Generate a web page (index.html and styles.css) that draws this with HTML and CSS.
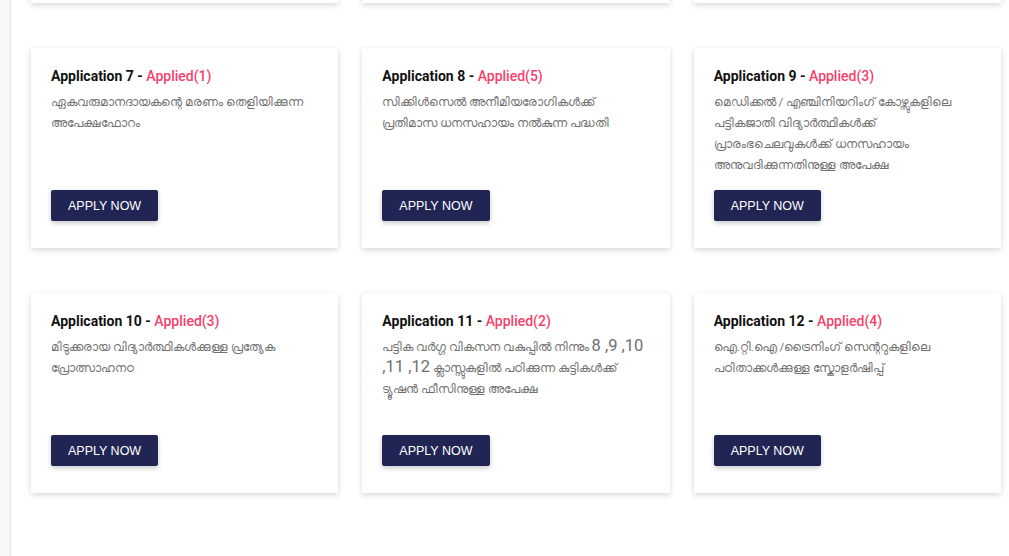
FILE: index.html
```html
<!DOCTYPE html>
<html lang="ml">
<head>
<meta charset="utf-8">
<title>Applications</title>
<link rel="stylesheet" href="styles.css">
</head>
<body>
<div class="layout">
  <aside class="sidebar"></aside>
  <main class="main">
    <div class="grid">
      <div class="card">
        <h3 class="title">Application 4 - <span class="applied">Applied(2)</span></h3>
        <p class="desc">വിദ്യാർത്ഥികൾക്കുള്ള ധനസഹായം</p>
        <button class="btn">APPLY NOW</button>
      </div>
      <div class="card">
        <h3 class="title">Application 5 - <span class="applied">Applied(1)</span></h3>
        <p class="desc">വിദ്യാർത്ഥികൾക്കുള്ള ധനസഹായം</p>
        <button class="btn">APPLY NOW</button>
      </div>
      <div class="card">
        <h3 class="title">Application 6 - <span class="applied">Applied(3)</span></h3>
        <p class="desc">വിദ്യാർത്ഥികൾക്കുള്ള ധനസഹായം</p>
        <button class="btn">APPLY NOW</button>
      </div>

      <div class="card">
        <h3 class="title">Application 7 - <span class="applied">Applied(1)</span></h3>
        <p class="desc">ഏകവരുമാനദായകന്റെ മരണം തെളിയിക്കുന്ന അപേക്ഷഫോറം</p>
        <button class="btn">APPLY NOW</button>
      </div>
      <div class="card">
        <h3 class="title">Application 8 - <span class="applied">Applied(5)</span></h3>
        <p class="desc">സിക്കിൾസെൽ അനീമിയരോഗികൾക്ക് പ്രതിമാസ ധനസഹായം നൽകുന്ന പദ്ധതി</p>
        <button class="btn">APPLY NOW</button>
      </div>
      <div class="card">
        <h3 class="title">Application 9 - <span class="applied">Applied(3)</span></h3>
        <p class="desc">മെഡിക്കൽ / എഞ്ചിനിയറിംഗ് കോഴ്സുകളിലെ പട്ടികജാതി വിദ്യാർത്ഥികൾക്ക് പ്രാരംഭചെലവുകൾക്ക് ധനസഹായം അനുവദിക്കുന്നതിനുള്ള അപേക്ഷ</p>
        <button class="btn">APPLY NOW</button>
      </div>

      <div class="card">
        <h3 class="title">Application 10 - <span class="applied">Applied(3)</span></h3>
        <p class="desc">മിടുക്കരായ വിദ്യാർത്ഥികൾക്കുള്ള പ്രത്യേക പ്രോത്സാഹനഠ</p>
        <button class="btn">APPLY NOW</button>
      </div>
      <div class="card">
        <h3 class="title">Application 11 - <span class="applied">Applied(2)</span></h3>
        <p class="desc">പട്ടിക വർഗ്ഗ വികസന വകുപ്പിൽ നിന്നും <span class="num">8 ,9 ,10 ,11 ,12</span> ക്ലാസ്സുകളിൽ പഠിക്കുന്ന കുട്ടികൾക്ക് ട്യൂഷൻ ഫീസിനുള്ള അപേക്ഷ</p>
        <button class="btn">APPLY NOW</button>
      </div>
      <div class="card">
        <h3 class="title">Application 12 - <span class="applied">Applied(4)</span></h3>
        <p class="desc">ഐ.റ്റി.ഐ /ട്രൈനിംഗ് സെന്ററുകളിലെ പഠിതാക്കൾക്കുള്ള സ്കോളർഷിപ്പ്</p>
        <button class="btn">APPLY NOW</button>
      </div>
    </div>
  </main>
</div>
</body>
</html>
```

FILE: styles.css
```css
* { box-sizing: border-box; }

html, body {
  margin: 0;
  padding: 0;
  background: #ffffff;
  height: 100%;
  overflow: hidden;
}

body {
  font-family: Roboto, "Noto Sans", "Liberation Sans", sans-serif;
}

.layout {
  display: flex;
  min-height: 100%;
}

.sidebar {
  width: 11px;
  flex: 0 0 11px;
  background: #f7f7f9;
  border-right: 1px solid #e4e4ee;
}

.main {
  flex: 1;
  padding: 0 8px 0 20px;
}

.grid {
  margin-top: -197px;
  display: grid;
  grid-template-columns: repeat(3, 1fr);
  column-gap: 24px;
  row-gap: 45px;
}

.card {
  height: 200px;
  background: #ffffff;
  box-shadow: 0 2px 6px rgba(0, 0, 0, 0.16);
  padding: 18px 20px 27px 20px;
  display: flex;
  flex-direction: column;
  align-items: flex-start;
}

.title {
  margin: 0;
  font-size: 14px;
  line-height: 20px;
  font-weight: 700;
  color: #111111;
}

.applied {
  color: #f5416c;
  font-weight: 500;
}

.desc {
  margin: 6px 0 0 0;
  font-size: 11.5px;
  line-height: 21px;
  color: #707070;
}

.num {
  font-size: 16.5px;
  line-height: 1;
}

.btn {
  flex-shrink: 0;
  margin-top: auto;
  height: 31px;
  padding: 0 17px;
  border: none;
  border-radius: 2px;
  background: #212553;
  color: #ffffff;
  font-family: "Liberation Sans", Arial, sans-serif;
  font-size: 12.5px;
  letter-spacing: 0;
  box-shadow: 0 2px 5px rgba(0, 0, 0, 0.22);
  cursor: pointer;
}
```
